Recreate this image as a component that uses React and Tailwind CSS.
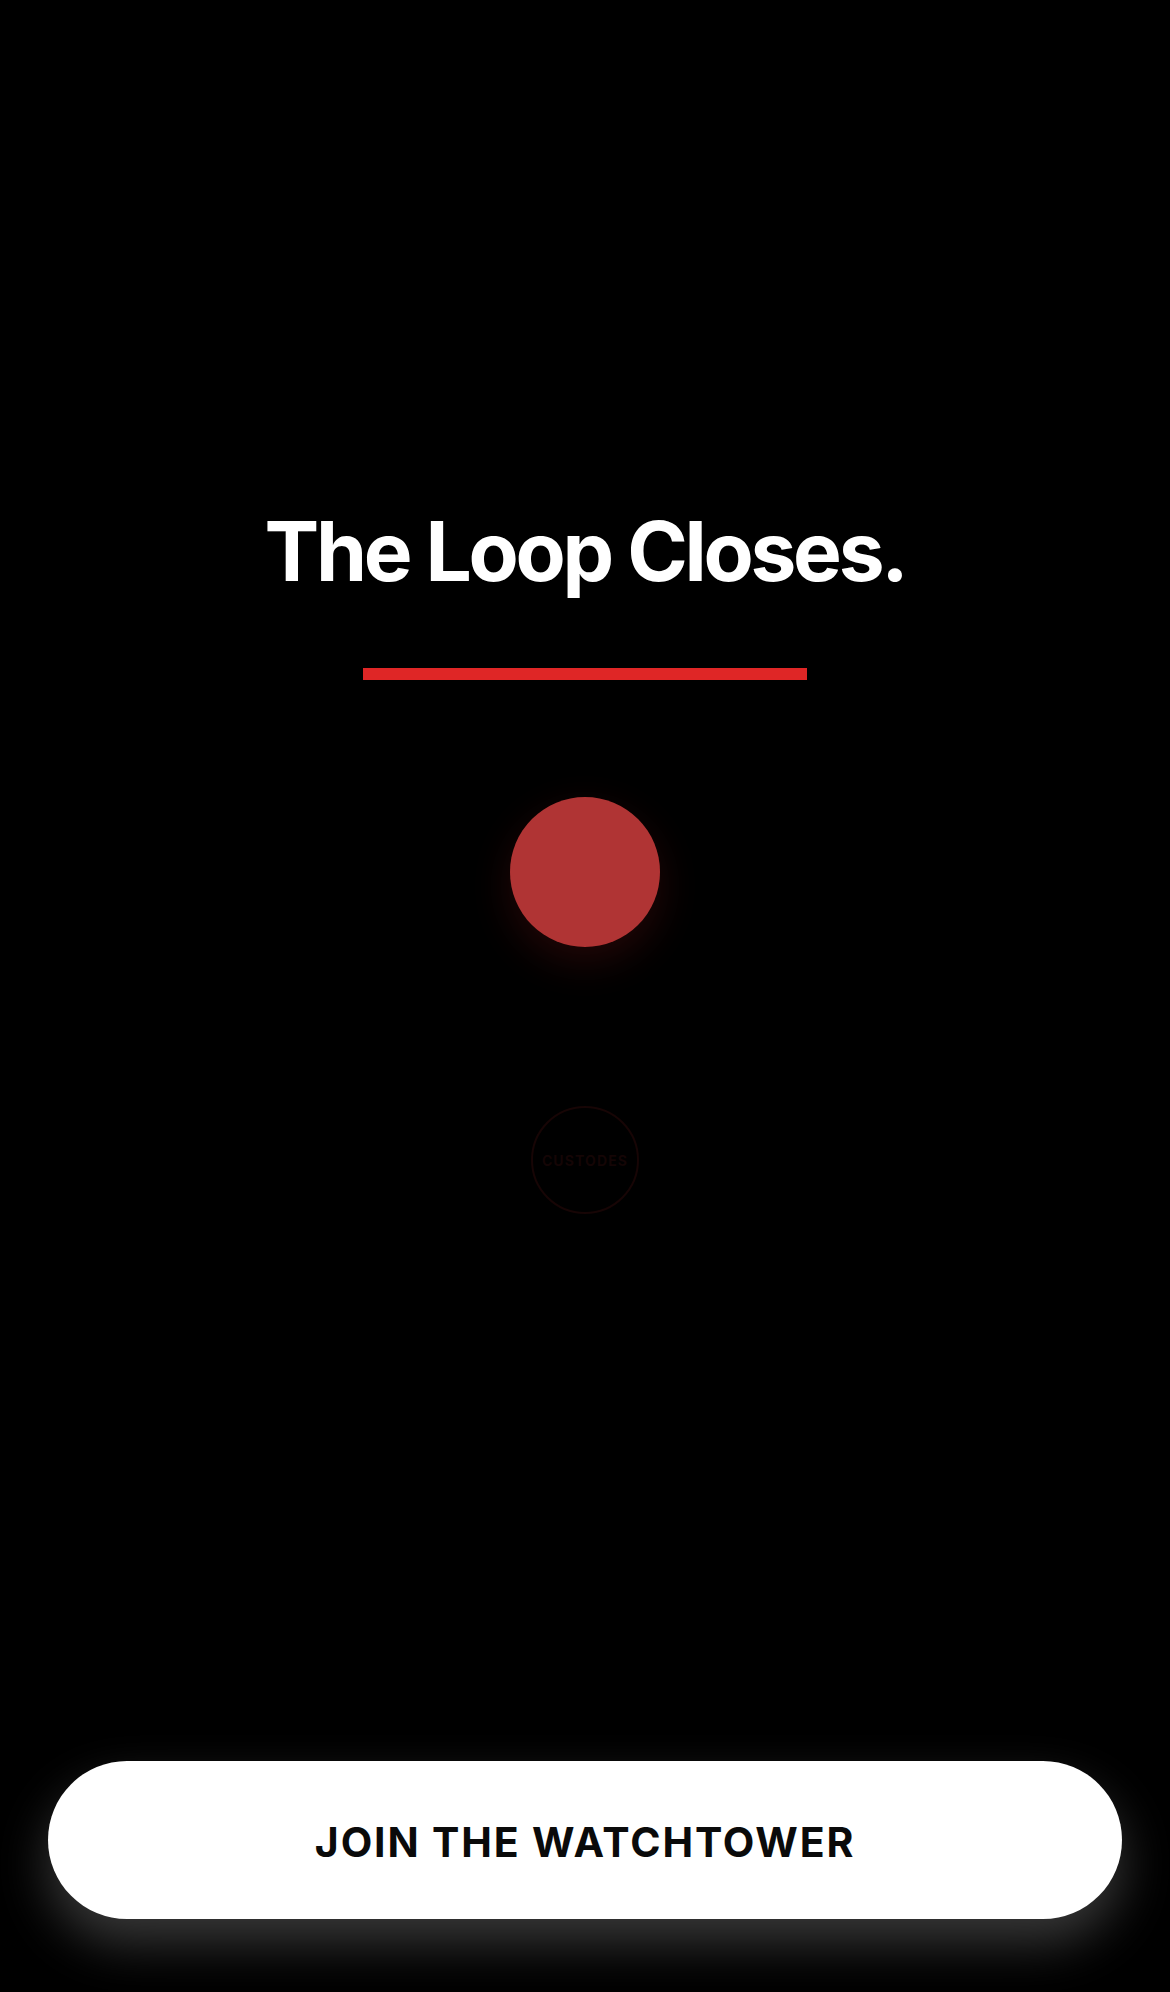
import React from 'react';

const App = () => {
  return (
    <div className="min-h-screen w-full bg-black flex flex-col items-center font-['Inter',sans-serif]">
      {/* Hero */}
      <main className="flex flex-col items-center pt-[511px] w-full">
        <h1 className="text-[82px] leading-none font-bold tracking-[-0.04em] text-white">
          The Loop Closes.
        </h1>

        <div className="mt-[75px] w-[444px] h-[12px] bg-[#df2626]" />

        <div className="mt-[117px] w-[150px] h-[150px] rounded-full bg-[#b03434] shadow-[0_14px_40px_rgba(200,40,40,0.18)]" />

        <div className="mt-[159px] w-[108px] h-[108px] rounded-full border-2 border-[#170505] flex items-center justify-center">
          <span className="text-[14px] font-bold tracking-[0.08em] text-[#140505]">CUSTODES</span>
        </div>
      </main>

      {/* CTA */}
      <div className="mt-auto w-full px-[48px] pb-[73px]">
        <button className="w-full h-[158px] pt-[5px] rounded-full bg-white text-[#0a0a0a] text-[41px] font-bold tracking-[0.045em] shadow-[0_24px_50px_rgba(255,255,255,0.22)]">
          JOIN THE WATCHTOWER
        </button>
      </div>
    </div>
  );
};

export default App;
